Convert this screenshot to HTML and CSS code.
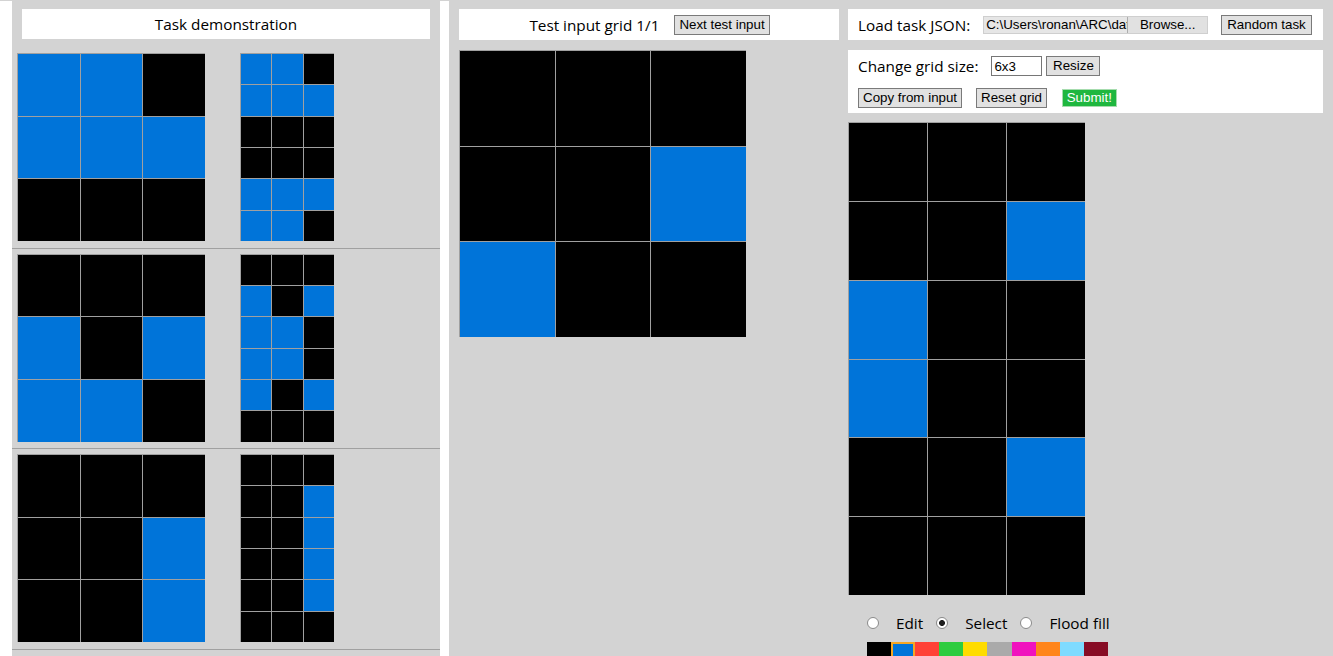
FILE: index.html
```html
<!DOCTYPE html>
<html>
<head>
<meta charset="utf-8">
<title>ARC testing interface</title>
<link rel="stylesheet" href="styles.css">
</head>
<body>
<div class="workspace">
  <div class="demo">
    <div class="demo-header">Task demonstration</div>
    <div class="pair">
      <div class="grid g-demo-in">
        <span class="u"></span><span class="u"></span><span class="k"></span>
        <span class="u"></span><span class="u"></span><span class="u"></span>
        <span class="k"></span><span class="k"></span><span class="k"></span>
      </div>
      <div class="grid g-demo-out">
        <span class="u"></span><span class="u"></span><span class="k"></span>
        <span class="u"></span><span class="u"></span><span class="u"></span>
        <span class="k"></span><span class="k"></span><span class="k"></span>
        <span class="k"></span><span class="k"></span><span class="k"></span>
        <span class="u"></span><span class="u"></span><span class="u"></span>
        <span class="u"></span><span class="u"></span><span class="k"></span>
      </div>
    </div>
    <div class="pair">
      <div class="grid g-demo-in">
        <span class="k"></span><span class="k"></span><span class="k"></span>
        <span class="u"></span><span class="k"></span><span class="u"></span>
        <span class="u"></span><span class="u"></span><span class="k"></span>
      </div>
      <div class="grid g-demo-out">
        <span class="k"></span><span class="k"></span><span class="k"></span>
        <span class="u"></span><span class="k"></span><span class="u"></span>
        <span class="u"></span><span class="u"></span><span class="k"></span>
        <span class="u"></span><span class="u"></span><span class="k"></span>
        <span class="u"></span><span class="k"></span><span class="u"></span>
        <span class="k"></span><span class="k"></span><span class="k"></span>
      </div>
    </div>
    <div class="pair">
      <div class="grid g-demo-in">
        <span class="k"></span><span class="k"></span><span class="k"></span>
        <span class="k"></span><span class="k"></span><span class="u"></span>
        <span class="k"></span><span class="k"></span><span class="u"></span>
      </div>
      <div class="grid g-demo-out">
        <span class="k"></span><span class="k"></span><span class="k"></span>
        <span class="k"></span><span class="k"></span><span class="u"></span>
        <span class="k"></span><span class="k"></span><span class="u"></span>
        <span class="k"></span><span class="k"></span><span class="u"></span>
        <span class="k"></span><span class="k"></span><span class="u"></span>
        <span class="k"></span><span class="k"></span><span class="k"></span>
      </div>
    </div>
  </div>

  <div class="evaluation">
    <div class="eval-input">
      <div class="eval-header">
        <span>Test input grid 1/1</span>
        <button class="btn btn-next">Next test input</button>
      </div>
      <div class="grid g-test">
        <span class="k"></span><span class="k"></span><span class="k"></span>
        <span class="k"></span><span class="k"></span><span class="u"></span>
        <span class="u"></span><span class="k"></span><span class="k"></span>
      </div>
    </div>

    <div class="eval-output">
      <div class="box load-box">
        <span class="label">Load task JSON:</span>
        <div class="file-field">
          <span class="file-name">C:\Users\ronan\ARC\data</span>
          <span class="file-browse">Browse...</span>
        </div>
        <button class="btn btn-random">Random task</button>
      </div>

      <div class="box edit-box">
        <div class="edit-row">
          <span class="label">Change grid size:</span>
          <input class="size-field" type="text" value="6x3">
          <button class="btn btn-resize">Resize</button>
        </div>
        <div class="edit-row edit-row-2">
          <button class="btn">Copy from input</button>
          <button class="btn btn-reset">Reset grid</button>
          <button class="btn btn-submit">Submit!</button>
        </div>
      </div>

      <div class="grid g-out">
        <span class="k"></span><span class="k"></span><span class="k"></span>
        <span class="k"></span><span class="k"></span><span class="u"></span>
        <span class="u"></span><span class="k"></span><span class="k"></span>
        <span class="u"></span><span class="k"></span><span class="k"></span>
        <span class="k"></span><span class="k"></span><span class="u"></span>
        <span class="k"></span><span class="k"></span><span class="k"></span>
      </div>

      <div class="toolbar">
        <span class="radio"></span><span class="tool-label">Edit</span>
        <span class="radio radio-on"></span><span class="tool-label">Select</span>
        <span class="radio"></span><span class="tool-label">Flood fill</span>
      </div>

      <div class="palette">
        <span class="sw s0"></span>
        <span class="sw s1 selected"></span>
        <span class="sw s2"></span>
        <span class="sw s3"></span>
        <span class="sw s4"></span>
        <span class="sw s5"></span>
        <span class="sw s6"></span>
        <span class="sw s7"></span>
        <span class="sw s8"></span>
        <span class="sw s9"></span>
      </div>
    </div>
  </div>
</div>
</body>
</html>
```

FILE: styles.css
```css
* {
  box-sizing: border-box;
}

html {
  overflow: hidden;
}

body {
  margin: 0;
  padding-left: 12px;
  height: 656px;
  overflow: hidden;
  background: #fff;
  border-top: 1px solid #d3d3d3;
  font-family: "Open Sans", "Liberation Sans", sans-serif;
  font-size: 15.3px;
  color: #000;
}

.workspace {
  display: flex;
  gap: 9px;
  height: 655px;
}

/* ---------- demonstration ---------- */
.demo {
  flex: none;
  width: 428px;
  background: #d3d3d3;
  padding-top: 8px;
}

.demo-header {
  margin: 0 10px 9px;
  height: 30px;
  line-height: 30px;
  background: #fff;
  text-align: center;
}

.pair {
  display: flex;
  gap: 35px;
  padding: 5px 0 6.5px 5px;
  border-bottom: 1px solid #a0a0a0;
}

/* ---------- grids ---------- */
.grid {
  display: grid;
  flex: none;
}

.grid span {
  border-top: 1px solid #a0a0a0;
  border-left: 1px solid #a0a0a0;
}

.grid .k {
  background: #000;
}

.grid .u {
  background: #0074d9;
}

.g-demo-in {
  width: 188px;
  height: 188px;
  grid-template-columns: repeat(3, 1fr);
  grid-template-rows: repeat(3, 1fr);
}

.g-demo-out {
  width: 94px;
  height: 188px;
  grid-template-columns: repeat(3, 1fr);
  grid-template-rows: repeat(6, 1fr);
}

.g-test {
  width: 287px;
  height: 287px;
  grid-template-columns: repeat(3, 1fr);
  grid-template-rows: repeat(3, 1fr);
}

.g-out {
  width: 237px;
  height: 473px;
  grid-template-columns: repeat(3, 1fr);
  grid-template-rows: repeat(6, 1fr);
  margin-top: 9px;
}

/* ---------- evaluation ---------- */
.evaluation {
  flex: 1;
  display: flex;
  gap: 9px;
  background: #d3d3d3;
  padding: 8px 10px 0;
}

.eval-input {
  flex: none;
  width: 380px;
}

.eval-header {
  height: 31px;
  margin-bottom: 10px;
  background: #fff;
  display: flex;
  align-items: center;
  justify-content: center;
  gap: 15px;
  padding-left: 1px;
}

.eval-output {
  flex: none;
  width: 475px;
}

.box {
  background: #fff;
  padding: 0 10px;
}

.load-box {
  height: 31px;
  display: flex;
  align-items: center;
  margin-bottom: 10px;
}

.label {
  white-space: nowrap;
}

/* ---------- buttons & fields ---------- */
.btn {
  font-family: "Liberation Sans", Arial, sans-serif;
  font-size: 13.33px;
  color: #000;
  height: 20px;
  padding: 0 4px;
  background: #e1e1e1;
  border: 1px solid #7a7a7a;
  border-radius: 0;
  line-height: 18px;
  white-space: nowrap;
}

.file-field {
  display: flex;
  width: 225px;
  height: 18px;
  margin-left: 13px;
  background: #e6e6e6;
  border: 1px solid #cfcfcf;
  font-family: "Liberation Sans", Arial, sans-serif;
  font-size: 13.33px;
  line-height: 16px;
}

.file-name {
  flex: 1;
  overflow: hidden;
  white-space: nowrap;
  padding-left: 2px;
}

.file-browse {
  flex: none;
  width: 80px;
  text-align: center;
  background: #e1e1e1;
  border-left: 1px solid #adadad;
}

.btn-random {
  margin-left: 13px;
  padding: 0 5px;
}

.edit-box {
  padding-top: 6px;
  padding-bottom: 5px;
}

.edit-row {
  display: flex;
  align-items: center;
  height: 20px;
}

.edit-row-2 {
  margin-top: 12px;
}

.size-field {
  width: 51px;
  height: 20px;
  margin: 0 4px 0 13px;
  padding: 0 2px;
  border: 1px solid #767676;
  font-family: "Liberation Sans", Arial, sans-serif;
  font-size: 13.33px;
  color: #000;
  background: #fff;
}

.btn-resize {
  width: 54px;
  padding: 0;
}

.btn-reset {
  margin-left: 14px;
}

.btn-submit {
  margin-left: 15px;
  height: 18px;
  line-height: 16px;
  width: 55px;
  padding: 0;
  background: #1fb73f;
  color: #fff;
  border: 1px solid #a6dcae;
}

/* ---------- toolbar ---------- */
.toolbar {
  display: flex;
  align-items: center;
  height: 23px;
  margin-top: 16px;
  padding-left: 19px;
}

.radio {
  flex: none;
  width: 12px;
  height: 12px;
  border-radius: 50%;
  border: 1px solid #8a8a8a;
  background: #fff;
  margin-left: 13px;
}

.radio:first-child {
  margin-left: 0;
}

.radio-on {
  background: radial-gradient(circle, #1e1e1e 0 2.6px, #fff 3.3px);
}

.tool-label {
  margin-left: 17px;
}

/* ---------- palette ---------- */
.palette {
  display: flex;
  width: 241px;
  height: 24px;
  margin-top: 8px;
  margin-left: 19px;
}

.sw {
  flex: 1;
}

.s0 { background: #000; }
.s1 { background: #0074d9; }
.s2 { background: #ff4136; }
.s3 { background: #2ecc40; }
.s4 { background: #ffdc00; }
.s5 { background: #aaaaaa; }
.s6 { background: #f012be; }
.s7 { background: #ff851b; }
.s8 { background: #7fdbff; }
.s9 { background: #870c25; }

.selected {
  box-shadow: inset 0 0 0 2px #f5a623;
}
```
